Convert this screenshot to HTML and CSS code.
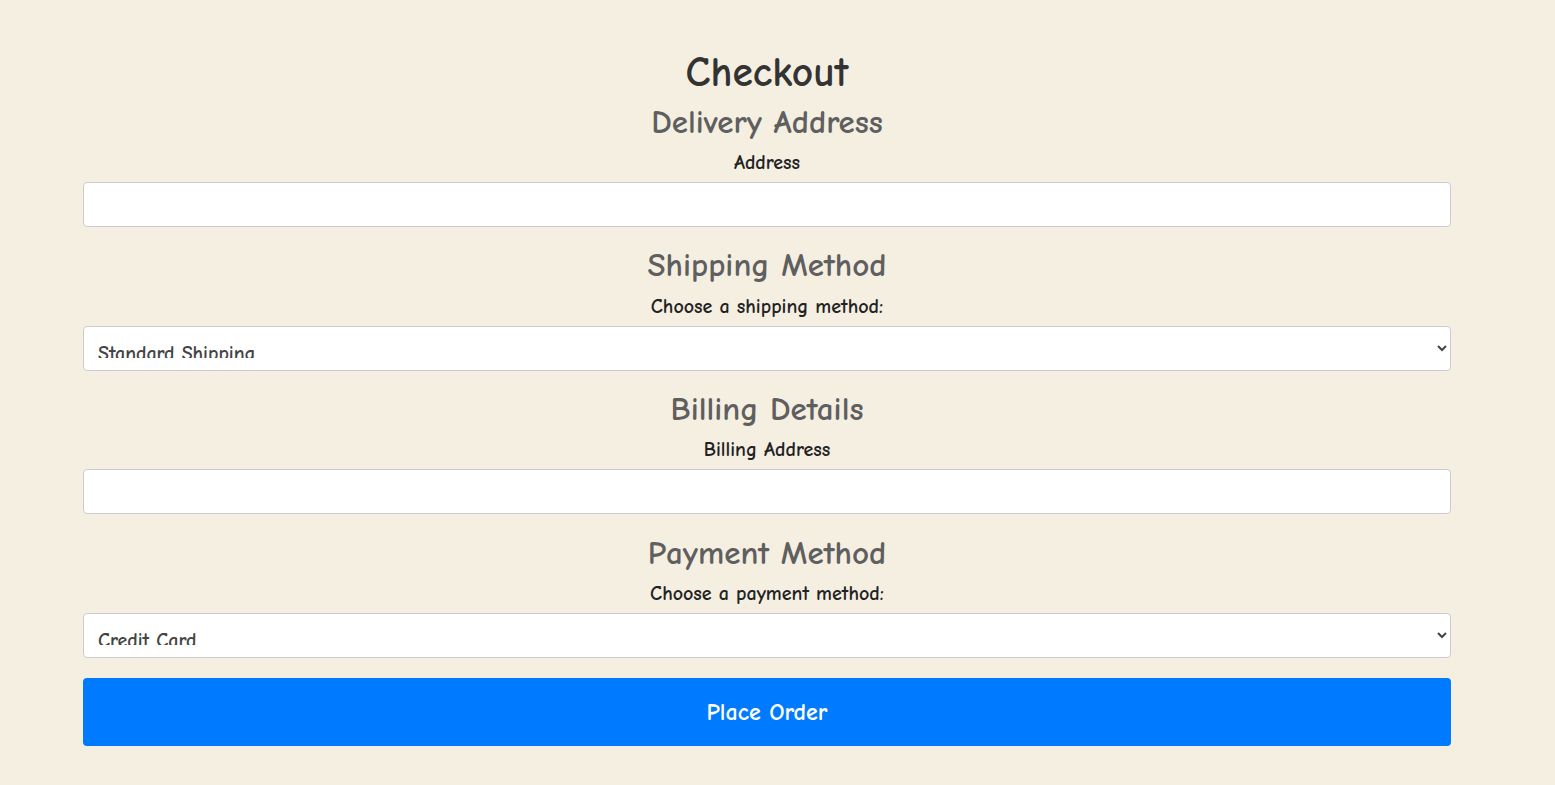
FILE: index.html
```html
<!DOCTYPE html>
<html lang="en">
<head>
<meta charset="utf-8">
<title>Checkout</title>
<link rel="stylesheet" href="styles.css">
</head>
<body>
<main class="checkout">
  <h1 class="title">Checkout</h1>
  <form class="form">
    <section class="section">
      <h2 class="section-title">Delivery Address</h2>
      <label class="label" for="address">Address</label>
      <input class="control" id="address" type="text">
    </section>
    <section class="section">
      <h2 class="section-title">Shipping Method</h2>
      <label class="label" for="shipping">Choose a shipping method:</label>
      <select class="control select" id="shipping">
        <option>Standard Shipping</option>
        <option>Express Shipping</option>
      </select>
    </section>
    <section class="section">
      <h2 class="section-title">Billing Details</h2>
      <label class="label" for="billing">Billing Address</label>
      <input class="control" id="billing" type="text">
    </section>
    <section class="section last">
      <h2 class="section-title">Payment Method</h2>
      <label class="label" for="payment">Choose a payment method:</label>
      <select class="control select" id="payment">
        <option>Credit Card</option>
        <option>PayPal</option>
      </select>
    </section>
    <button class="submit" type="button">Place Order</button>
  </form>
</main>
</body>
</html>
```
FILE: styles.css
```css
* { box-sizing: border-box; }
html, body { margin: 0; padding: 0; }
body {
  background: #f5efe2;
  font-family: "Comic Sans MS", "Comic Neue", "Noto Sans", sans-serif;
  color: #222;
}
.checkout {
  width: 1368px;
  margin: 0 0 0 83px;
  padding-top: 51px;
}
.title {
  margin: 0 0 9.5px;
  text-align: center;
  font-size: 41.5px;
  line-height: 44px;
  font-weight: 700;
  color: #333;
}
.form { display: flex; flex-direction: column; }
.section { display: flex; flex-direction: column; margin-bottom: 21.2px; }
.section.last { margin-bottom: 20px; }
.section-title {
  margin: 0 0 12.5px;
  text-align: center;
  font-size: 33px;
  line-height: 34px;
  font-weight: 700;
  color: #5f5f5f;
}
.label {
  display: block;
  text-align: center;
  font-size: 20px;
  line-height: 24px;
  font-weight: 700;
  margin-bottom: 7px;
  color: #222;
}
.control {
  display: block;
  width: 100%;
  height: 45px;
  border: 1px solid #ccc;
  border-radius: 4px;
  background: #fff;
  font-family: inherit;
  font-size: 20px;
  font-weight: 700;
  color: #444;
  padding: 0 12px;
}
.select {
  padding: 14px 12px 12px 10px;
}
.submit {
  display: block;
  width: 100%;
  height: 68px;
  border: none;
  border-radius: 4px;
  background: #007bff;
  color: #fff;
  font-family: inherit;
  font-size: 24px;
  font-weight: 700;
}
```
